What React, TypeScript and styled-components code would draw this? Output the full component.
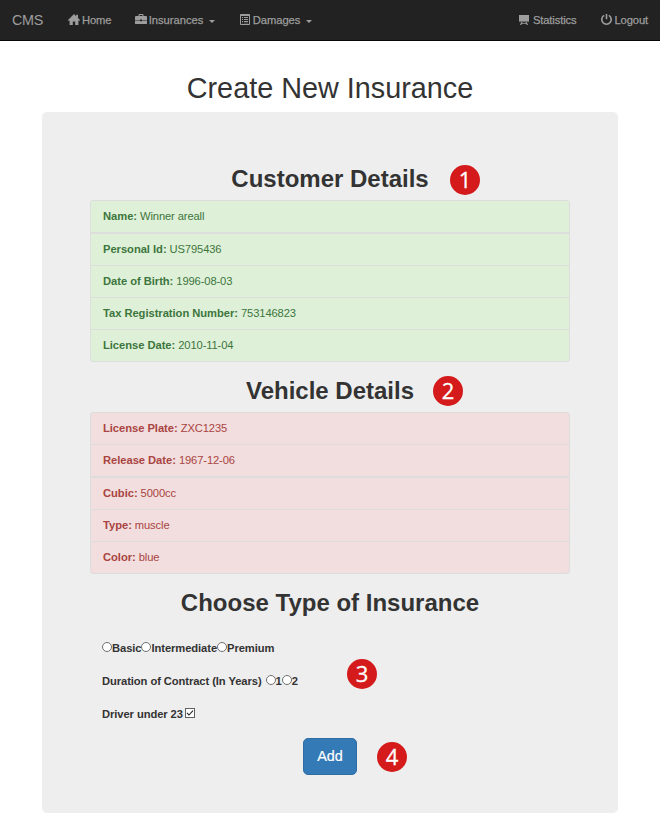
import React from 'react';
import styled, { createGlobalStyle } from 'styled-components';

const GlobalStyle = createGlobalStyle`
  * { box-sizing: border-box; }
  body {
    margin: 0;
    background: #fff;
    color: #333;
    font-family: "Liberation Sans", Arial, sans-serif;
    font-size: 11.2px;
    line-height: 16px;
  }
`;

const Page = styled.div`
  height: 830px;
  overflow: hidden;
`;

const Navbar = styled.nav`
  display: flex;
  align-items: center;
  justify-content: space-between;
  height: 41px;
  padding: 0 12px;
  background: #222;
  border-bottom: 1px solid #080808;
  color: #9d9d9d;
`;

const NavGroup = styled.div<{ $gap: number }>`
  display: flex;
  align-items: center;
  gap: ${(p) => p.$gap}px;
`;

const Brand = styled.span`
  width: 32.6px;
  font-size: 14.4px;
  letter-spacing: -0.3px;
`;

const NavItem = styled.span<{ $gap?: number; $tracking?: number }>`
  display: flex;
  align-items: center;
  gap: ${(p) => p.$gap ?? 2}px;
  white-space: nowrap;
  letter-spacing: ${(p) => p.$tracking ?? -0.05}px;
  -webkit-text-stroke: 0.25px #9d9d9d;
`;

const Icon = styled.svg`
  display: block;
  flex: none;
  fill: currentColor;
`;

const Caret = styled.span`
  margin: 2px 1px 0 4px;
  border-top: 3px solid #9d9d9d;
  border-left: 3px solid transparent;
  border-right: 3px solid transparent;
`;

const Title = styled.h1`
  margin: 31px 0 8px;
  font-size: 28.8px;
  font-weight: 400;
  line-height: 32px;
  text-align: center;
`;

const Panel = styled.main`
  display: flex;
  flex-direction: column;
  width: 576px;
  height: 701px;
  margin: 0 auto;
  padding: 38px 48px 0;
  background: #eee;
  border-radius: 5px;
`;

const SectionTitle = styled.h2`
  position: relative;
  margin: 16px 0 8px;
  font-size: 24px;
  font-weight: 700;
  line-height: 26px;
  text-align: center;
`;

const Badge = styled.span<{ $x: number; $y: number }>`
  position: absolute;
  left: ${(p) => p.$x}px;
  top: ${(p) => p.$y}px;
  width: 30px;
  height: 30px;
  border-radius: 50%;
  background: #d41a1b;
  color: #fff;
  font: 400 22px/28px "Open Sans", "Noto Sans", sans-serif;
  letter-spacing: 0;
  -webkit-text-stroke: 0.3px #fff;
  text-align: center;
`;

const List = styled.ul<{ $tone: 'green' | 'red' }>`
  margin: 0;
  padding: 0;
  list-style: none;
  border: 1px solid #ddd;
  border-radius: 3px;
  overflow: hidden;
  color: ${(p) => (p.$tone === 'green' ? '#3c763d' : '#a94442')};
  background: ${(p) => (p.$tone === 'green' ? '#dff0d8' : '#f2dede')};
`;

const Row = styled.li<{ $thick: boolean }>`
  height: ${(p) => (p.$thick ? 33 : 32)}px;
  padding: 7px 12px 0;
  border-bottom: ${(p) => (p.$thick ? 2 : 1)}px solid #ddd;
  letter-spacing: -0.12px;
  &:last-child {
    height: 31px;
    border-bottom: 0;
  }
`;

const Term = styled.b`
  letter-spacing: -0.04px;
`;

const Options = styled.form`
  display: flex;
  flex-direction: column;
  align-items: flex-start;
  position: relative;
  padding: 16px 0 0 12px;
  font-weight: 700;
  letter-spacing: -0.08px;
`;

const OptionRow = styled.div`
  display: flex;
  align-items: center;
  height: 16px;
  margin-bottom: 17px;
  white-space: nowrap;
`;

const OptionLabel = styled.label`
  display: flex;
  align-items: center;
`;

const Caption = styled.span<{ $gap: number }>`
  margin-right: ${(p) => p.$gap}px;
`;

const Radio = styled.input`
  appearance: none;
  width: 10px;
  height: 10px;
  margin: 0 0 2px;
  border: 1px solid #707070;
  border-radius: 50%;
  background: #fff;
`;

const CheckFrame = styled.span`
  display: grid;
  width: 10px;
  height: 10px;
  margin-bottom: 2px;
  > * { grid-area: 1 / 1; }
`;

const Check = styled.input`
  appearance: none;
  width: 10px;
  height: 10px;
  margin: 0;
  border: 1px solid #606060;
  background: #fff;
`;

const Tick = styled.svg`
  z-index: 1;
  pointer-events: none;
`;

const Submit = styled.button`
  align-self: center;
  width: 54px;
  height: 37px;
  margin: -1px 12px 0 0;
  padding: 0 0 1px;
  border: 1px solid #2e6da4;
  border-radius: 5px;
  background: #337ab7;
  color: #fff;
  font: 14.4px "Liberation Sans", Arial, sans-serif;
  -webkit-text-stroke: 0.2px #fff;
`;

const HomeIcon = () => (
  <Icon width="12" height="12" viewBox="0 0 12 12">
    <path d="M6 0 L8.2 2.2 V.8 H10 V4 L12 6.1 L11.4 7 L10.4 6.4 V11 H7.2 V7.4 H4.8 V11 H1.6 V6.4 L.6 7 L0 6.1 Z" />
  </Icon>
);

const BriefcaseIcon = () => (
  <Icon width="12" height="12" viewBox="0 0 12 12">
    <path d="M3.5 2 V1 Q3.5 0 4.5 0 H7.5 Q8.5 0 8.5 1 V2 H11 Q12 2 12 3 V6 H7 V5.6 H5 V6 H0 V3 Q0 2 1 2 Z M4.6 2 H7.4 V1.1 H4.6 Z M0 6.6 H5 V7.2 H7 V6.6 H12 V9.4 Q12 10 11.4 10 H.6 Q0 10 0 9.4 Z" fillRule="evenodd" />
  </Icon>
);

const ListIcon = () => (
  <Icon width="11" height="12" viewBox="0 0 11 12">
    <path d="M.8 0 H9.2 Q10 0 10 .9 V10.1 Q10 11 9.2 11 H.8 Q0 11 0 10.1 V.9 Q0 0 .8 0 Z M1 2 V10 H9 V2 Z" fillRule="evenodd" />
    <path d="M2 3h1v1H2z M4 3h4v1H4z M2 5h1v1H2z M4 5h4v1H4z M2 7h1v1H2z M4 7h4v1H4z M2 8.7h1v.6H2z M4 8.7h4v.6H4z" />
  </Icon>
);

const BoardIcon = () => (
  <Icon width="11" height="11" viewBox="0 0 11 11">
    <path d="M0 0 H10 V6 H0 Z" />
    <path d="M0 6 H10 V7.2 H0 Z" opacity=".6" />
    <path d="M2.2 7.2 H3.6 L3.2 8.2 H6.8 L6.4 7.2 H7.8 L9 10 H7.7 L7.3 9.1 H2.7 L2.3 10 H1 Z" />
  </Icon>
);

const PowerIcon = () => (
  <Icon width="11" height="12" viewBox="0 0 11 12">
    <path d="M3.2 1.4 A4.7 4.7 0 1 0 7.8 1.4" fill="none" stroke="currentColor" strokeWidth="1.6" />
    <path d="M4.7 0 H6.3 V5.2 H4.7 Z" />
  </Icon>
);

const customer = [
  ['Name', 'Winner areall'],
  ['Personal Id', 'US795436'],
  ['Date of Birth', '1996-08-03'],
  ['Tax Registration Number', '753146823'],
  ['License Date', '2010-11-04'],
];

const vehicle = [
  ['License Plate', 'ZXC1235'],
  ['Release Date', '1967-12-06'],
  ['Cubic', '5000cc'],
  ['Type', 'muscle'],
  ['Color', 'blue'],
];

type DetailsProps = { tone: 'green' | 'red'; rows: string[][]; thickRow: number };

const Details = ({ tone, rows, thickRow }: DetailsProps) => (
  <List $tone={tone}>
    {rows.map(([label, value], i) => (
      <Row key={label} $thick={i === thickRow}>
        <Term>{label}:</Term> {value}
      </Row>
    ))}
  </List>
);

const RadioOption = ({ name, label }: { name: string; label: string }) => (
  <OptionLabel>
    <Radio type="radio" name={name} />
    {label}
  </OptionLabel>
);

export default function App() {
  return (
    <Page>
      <GlobalStyle />
      <Navbar>
        <NavGroup $gap={23.4}>
          <Brand>CMS</Brand>
          <NavItem $tracking={-0.15}><HomeIcon />Home</NavItem>
          <NavItem $tracking={0}><BriefcaseIcon />Insurances<Caret /></NavItem>
          <NavItem><ListIcon />Damages<Caret /></NavItem>
        </NavGroup>
        <NavGroup $gap={24}>
          <NavItem $gap={3} $tracking={-0.12}><BoardIcon />Statistics</NavItem>
          <NavItem $gap={3} $tracking={-0.12}><PowerIcon />Logout</NavItem>
        </NavGroup>
      </Navbar>
      <Title>Create New Insurance</Title>
      <Panel>
        <SectionTitle>Customer Details<Badge $x={360} $y={-1}>1</Badge></SectionTitle>
        <Details tone="green" rows={customer} thickRow={0} />
        <SectionTitle>Vehicle Details<Badge $x={343} $y={-2}>2</Badge></SectionTitle>
        <Details tone="red" rows={vehicle} thickRow={1} />
        <SectionTitle>Choose Type of Insurance</SectionTitle>
        <Options>
          <OptionRow>
            <RadioOption name="type" label="Basic" />
            <RadioOption name="type" label="Intermediate" />
            <RadioOption name="type" label="Premium" />
          </OptionRow>
          <OptionRow>
            <Caption $gap={4}>Duration of Contract (In Years)</Caption>
            <RadioOption name="years" label="1" />
            <RadioOption name="years" label="2" />
          </OptionRow>
          <OptionRow>
            <Caption $gap={2}>Driver under 23</Caption>
            <CheckFrame>
              <Check type="checkbox" defaultChecked />
              <Tick width="10" height="10" viewBox="0 0 10 10">
                <path d="M2 4.8 L4 7 L8 2.7" fill="none" stroke="#222" strokeWidth="1.1" />
              </Tick>
            </CheckFrame>
          </OptionRow>
          <Submit type="button">Add</Submit>
          <Badge $x={257} $y={35}>3</Badge>
          <Badge $x={287} $y={118}>4</Badge>
        </Options>
      </Panel>
    </Page>
  );
}
